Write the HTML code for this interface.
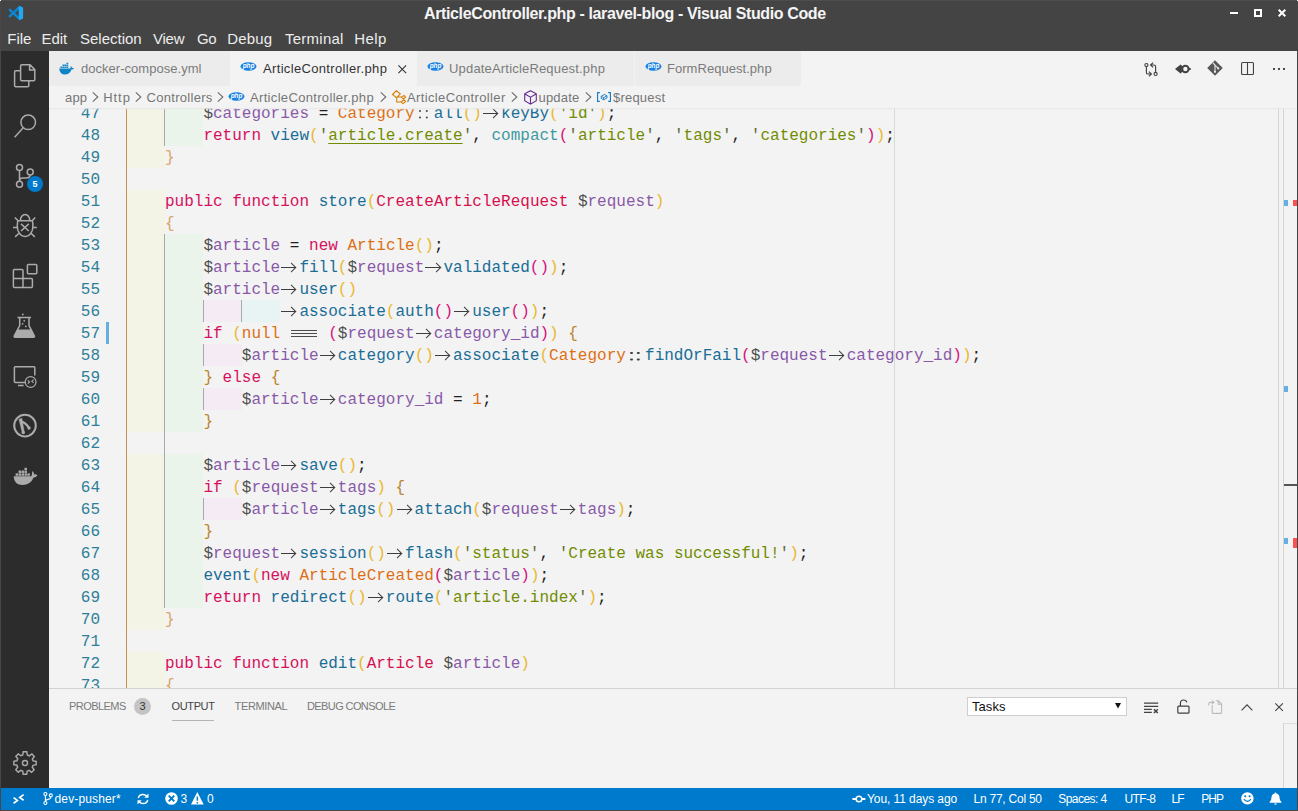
<!DOCTYPE html>
<html lang="en">
<head>
<meta charset="utf-8">
<title>ArticleController.php - laravel-blog - Visual Studio Code</title>
<style>
*,*::before,*::after{box-sizing:border-box;margin:0;padding:0}
html,body{width:1298px;height:811px;overflow:hidden;background:#f3f3f3}
body{position:relative;font-family:"Liberation Sans",sans-serif;color:#333}
.abs{position:absolute}
svg{position:absolute;overflow:visible}
/* ---------- title + menu ---------- */
#titlebar{position:absolute;left:0;top:0;width:1298px;height:51px;background:#444}
#title{position:absolute;left:424px;top:3px;height:22px;line-height:22px;font-weight:bold;font-size:16px;color:#f4f4f4;white-space:pre;letter-spacing:-0.37px}
.mi{position:absolute;top:28px;height:22px;line-height:22px;font-size:15px;color:#ededed;white-space:pre}
/* ---------- activity bar ---------- */
#activity{position:absolute;left:1px;top:51px;width:48px;height:737px;background:#2c2c2c}
#activity svg{fill:none;stroke:#ababab;stroke-width:1.5}
/* ---------- tabs ---------- */
#tabs{position:absolute;left:49px;top:51px;width:1248px;height:35px;background:#f3f3f3}
.tab{position:absolute;top:0;height:35px;background:#ececec}
.tab.on{background:#f3f3f3}
.tab .lb{position:absolute;left:32px;top:0;height:35px;line-height:35px;font-size:13px;color:#7b7b7b;white-space:pre}
.tab.on .lb{color:#333}
/* ---------- breadcrumbs ---------- */
#crumbs{position:absolute;left:49px;top:86px;width:1248px;height:22px;background:#f3f3f3}
#crumbs span{position:absolute;top:1px;height:22px;line-height:22px;font-size:13px;color:#767676;white-space:pre}
/* ---------- editor ---------- */
#editor{position:absolute;left:49px;top:108px;width:1248px;height:580px;overflow:hidden;background:#f3f3f3;
  font-family:"Liberation Mono",monospace;font-size:16px}
.ln{position:absolute;left:0;width:1248px;height:22px;line-height:22px;white-space:pre}
.no{position:absolute;left:0;top:1px;width:51px;text-align:right;color:#2d7f99}
.tx{position:absolute;top:1px;height:22px}
.r{position:absolute;top:0;width:38.4px;height:22px}
.r1{background:#f4f4e6}.r2{background:#ebf4eb}.r3{background:#f4ebf4}.r4{background:#e8f3f3}
.g{position:absolute;width:1px;background:#a9a9a9}
.g.go{background:#c98f52}
.k{color:#d6105e}.f{color:#196d96}.v{color:#8959a8}.d{color:#4d4d4d}.c{color:#dd6f13}.t{color:#d6104f}
.s{color:#718c00}.q{color:#5f6b3a}.n{color:#dd6f13}.p{color:#1f1f1f}.aq{color:#3e999f}
.b1{color:#eab830}.b2{color:#d6127a}.ca{color:#dba469}.cb{color:#b8862e}
.s.u{text-decoration:underline;text-decoration-color:#718c00;text-underline-offset:3px;text-decoration-thickness:1px}
.ar,.dc,.e3{display:inline-block;position:relative;height:22px;vertical-align:top;font-size:0;color:transparent}
.ar{width:19.2px}
.ar::before{content:"";position:absolute;left:1.1px;top:9.65px;width:15px;height:1.7px;background:#3e3e3e}
.ar::after{content:"";position:absolute;left:8.25px;top:7.1px;width:6.8px;height:6.8px;border-top:1.7px solid #3e3e3e;border-right:1.7px solid #3e3e3e;transform:rotate(45deg)}
.dc{width:19.2px}
.dc::before{content:"";position:absolute;left:4.6px;top:7.2px;width:2.1px;height:2.2px;border-radius:1px;background:#444;box-shadow:6.8px 0 0 #444,0 6.4px 0 #444,6.8px 6.4px 0 #444}
.e3{width:28.8px}
.e3::before{content:"";position:absolute;left:1.4px;top:7px;width:25.8px;height:1px;background:#4a4a4a;box-shadow:0 3px 0 #4a4a4a,0 6px 0 #4a4a4a}
/* ---------- panel ---------- */
#panel{position:absolute;left:49px;top:688px;width:1248px;height:100px;background:#f3f3f3;border-top:1px solid #d2d2d2}
.pt{position:absolute;top:6px;height:22px;line-height:22px;font-size:11px;color:#7a7a7a;white-space:pre}
/* ---------- status ---------- */
#status{position:absolute;left:1px;top:788px;width:1296px;height:22px;background:#007acc;color:#fff}
#status span{position:absolute;top:0;height:22px;line-height:22px;font-size:12px;white-space:pre;color:#fff}
#status svg{fill:#fff}
</style>
</head>
<body>

<!-- =================== TITLE BAR + MENU =================== -->
<div id="titlebar">
  <svg style="left:9px;top:6px" width="14" height="14" viewBox="0 0 14 14"><path d="M0.9 3.9 L10.6 12.8 M0.9 10.1 L10.6 1.2" stroke="#0b86d4" stroke-width="2.5" stroke-linecap="round" fill="none"/><path d="M9.7 0.9 L10.6 -0.1 L14.1 1.4 V12.6 L10.6 14.1 L9.7 13.1 Z" fill="#23a9f2"/></svg>
  <div id="title">ArticleController.php - laravel-blog - Visual Studio Code</div>
  <span class="mi" style="left:7.3px">File</span>
  <span class="mi" style="left:41.4px">Edit</span>
  <span class="mi" style="left:80px">Selection</span>
  <span class="mi" style="left:153px;letter-spacing:-0.25px">View</span>
  <span class="mi" style="left:197px;letter-spacing:-0.5px">Go</span>
  <span class="mi" style="left:227.3px;letter-spacing:0.15px">Debug</span>
  <span class="mi" style="left:285px;letter-spacing:0.25px">Terminal</span>
  <span class="mi" style="left:354.3px;letter-spacing:0.4px">Help</span>
  <i class="abs" style="left:1230px;top:12px;width:8px;height:2px;background:#fff"></i>
  <i class="abs" style="left:1254px;top:9px;width:8px;height:8px;border:2px solid #fff"></i>
  <svg style="left:1278px;top:9px" width="8" height="8" viewBox="0 0 8 8"><path d="M0.7 0.7 L7.3 7.3 M7.3 0.7 L0.7 7.3" stroke="#fff" stroke-width="2" fill="none"/></svg>
</div>

<!-- =================== ACTIVITY BAR =================== -->
<div id="activity">
  <!-- explorer (files) : coords relative to activity bar (x-1, y-51) -->
  <svg style="left:0;top:0" width="48" height="50" viewBox="0 0 48 50">
    <path d="M27 13.8 H20.8 Q19.6 13.8 19.6 15 V28.6 Q19.6 29.8 20.8 29.8 H32.6 Q33.8 29.8 33.8 28.6 V18.6 L29 13.8 Z M28.6 14 V19 H33.6"/>
    <path d="M19.4 19.8 H14.8 Q13.6 19.8 13.6 21 V34.6 Q13.6 35.8 14.8 35.8 H26.6 Q27.8 35.8 27.8 34.6 V30"/>
  </svg>
  <!-- search -->
  <svg style="left:0;top:50px" width="48" height="50" viewBox="0 0 48 50">
    <circle cx="27.2" cy="21.3" r="7.3"/><path d="M22 27 L13.6 36.2"/>
  </svg>
  <!-- source control -->
  <svg style="left:0;top:100px" width="48" height="50" viewBox="0 0 48 50">
    <circle cx="18.5" cy="16.4" r="3"/><circle cx="18.5" cy="33.3" r="3"/><circle cx="29.2" cy="21" r="3"/>
    <path d="M18.5 19.4 V30.3 M29.2 24 Q29.2 26.9 25 26.9 H21.5 Q18.5 26.9 18.5 30"/>
  </svg>
  <div class="abs" style="left:26px;top:125px;width:16px;height:16px;border-radius:8px;background:#007acc;color:#fff;font:bold 9px 'Liberation Sans',sans-serif;line-height:16px;text-align:center">5</div>
  <!-- debug -->
  <svg style="left:0;top:150px" width="48" height="50" viewBox="0 0 48 50">
    <path d="M19.4 19.6 A4.7 6.2 0 0 1 28.8 19.6"/>
    <path d="M16.8 19.8 H31.4 Q32.6 26 31 30 Q28.6 35.5 24.1 35.5 Q19.6 35.5 17.2 30 Q15.6 26 16.8 19.8 Z"/>
    <path d="M13.9 16.4 L16.8 19.6 M34.2 16.4 L31.4 19.6 M12 26.6 H16.2 M32 26.6 H35.9 M14.1 35.9 L18.1 32.2 M33.8 35.9 L30 32.2 M20 22.9 L27.8 30 M27.8 22.9 L20 30"/>
  </svg>
  <!-- extensions -->
  <svg style="left:0;top:200px" width="48" height="50" viewBox="0 0 48 50">
    <path d="M13.4 18.6 H21 Q22 18.6 22 19.6 V27.4 H30.4 Q31.4 27.4 31.4 28.4 V35.6 Q31.4 36.6 30.4 36.6 H13.4 Q12.4 36.6 12.4 35.6 V19.6 Q12.4 18.6 13.4 18.6 Z M12.4 27.4 H22 V36.6"/>
    <rect x="26.4" y="13.6" width="9.4" height="9.2" rx="1"/>
  </svg>
  <!-- test flask -->
  <svg style="left:0;top:250px" width="48" height="50" viewBox="0 0 48 50">
    <path d="M16.5 16.4 H30 M18.7 16.6 V24.5 L13.2 35 Q12.8 36.2 14 36.2 H32.6 Q33.8 36.2 33.4 35 L28 24.5 V16.6" />
    <path d="M16.4 28.6 H30.2 L33.2 35 Q33.4 35.9 32.6 35.9 H14 Q13.2 35.9 13.4 35 Z" fill="#ababab" stroke="none"/>
    <circle cx="21.8" cy="13.4" r="0.9" fill="#ababab" stroke="none"/><circle cx="23.2" cy="19.8" r="0.9" fill="#ababab" stroke="none"/><circle cx="21.6" cy="22.8" r="0.9" fill="#ababab" stroke="none"/><circle cx="24.8" cy="25.4" r="0.9" fill="#ababab" stroke="none"/>
  </svg>
  <!-- remote explorer -->
  <svg style="left:0;top:300px" width="48" height="50" viewBox="0 0 48 50">
    <path d="M25 31.4 H14.2 Q13.4 31.4 13.4 30.6 V16.6 Q13.4 15.8 14.2 15.8 H33 Q33.8 15.8 33.8 16.6 V24.4 M17 34.6 H22.6"/>
    <circle cx="29.6" cy="31" r="5.4" stroke-width="1.2"/>
    <path d="M26.8 29.4 L28.6 31 L26.8 32.6 M32.6 28.6 L30.8 30.2 L32.6 31.8" stroke-width="1.1"/>
  </svg>
  <!-- gitlens -->
  <svg style="left:0;top:350px" width="48" height="50" viewBox="0 0 48 50">
    <circle cx="24" cy="24.6" r="10.8" stroke-width="2"/>
    <path d="M17.9 18.2 L20.9 17.2 L23.4 31.4 L21.2 31.7 Z" fill="#ababab" stroke="#ababab" stroke-width="0.4"/>
    <path d="M20.6 20.6 Q25 22 27.9 26.8" stroke-width="2.2"/>
    <circle cx="22.3" cy="31.6" r="1.7" fill="#ababab" stroke="none"/><circle cx="28" cy="27" r="1.7" fill="#ababab" stroke="none"/>
  </svg>
  <!-- docker -->
  <svg style="left:0;top:400px" width="48" height="50" viewBox="0 0 48 50">
    <g fill="#ababab" stroke="none">
    <path d="M12.6 25.2 H30.4 Q31.2 22.6 31.2 20 Q33 21.4 33.3 23.4 Q35.2 23 36.4 24.2 Q35.4 26.6 32.6 26.6 Q29.6 34 21.4 34 Q13.2 34 12.6 25.2 Z"/>
    <rect x="14.60" y="22.35" width="2.5" height="2.4"/><rect x="17.55" y="22.35" width="2.5" height="2.4"/><rect x="20.50" y="22.35" width="2.5" height="2.4"/><rect x="23.45" y="22.35" width="2.5" height="2.4"/><rect x="26.40" y="22.35" width="2.5" height="2.4"/><rect x="17.55" y="19.55" width="2.5" height="2.4"/><rect x="20.50" y="19.55" width="2.5" height="2.4"/><rect x="23.45" y="19.55" width="2.5" height="2.4"/><rect x="23.45" y="16.8" width="2.5" height="2.35"/>
    </g>
  </svg>
  <!-- gear -->
  <svg style="left:0;top:687px" width="48" height="50" viewBox="0 0 48 50">
    <g transform="translate(24 25) scale(0.93)">
      <path id="gearp" d="M-1.9 -12 H1.9 L2.5 -8.6 L4.6 -7.7 L7.4 -9.7 L10 -7 L7.9 -4.3 L8.7 -2.3 L12 -1.7 V1.9 L8.7 2.5 L7.8 4.6 L9.8 7.3 L7.1 10 L4.4 8 L2.4 8.8 L1.8 12 H-1.9 L-2.5 8.7 L-4.5 7.9 L-7.3 9.9 L-9.9 7.2 L-7.9 4.5 L-8.7 2.4 L-12 1.8 V-1.8 L-8.7 -2.4 L-7.8 -4.5 L-9.8 -7.2 L-7.2 -9.8 L-4.4 -7.8 L-2.4 -8.7 Z" stroke-width="1.55"/>
      <circle cx="0" cy="0" r="2.7" stroke-width="1.55"/>
    </g>
  </svg>

</div>

<!-- =================== TABS =================== -->
<div id="tabs">
  <!-- tab x are relative to #tabs (abs x - 49) -->
  <div class="tab" style="left:0;width:181px">
    <svg style="left:10px;top:12px" width="16" height="12" viewBox="0 0 16 12"><path d="M0.2 5.6 H11.4 Q11.9 4.2 11.4 3.1 Q12.9 3.7 13.1 4.9 Q14.3 4.6 15 5.2 Q14.3 6.6 12.5 6.6 Q10.8 11.6 5.8 11.6 Q0.8 11.6 0.2 5.6 Z" fill="#0b84c8"/><path d="M1.4 3.4 H9.2 V5.1 H1.4 Z M3.4 1.5 H9.2 V3 H3.4 Z M7.3 -0.3 H9.2 V1.1 H7.3 Z" fill="#0b84c8"/><path d="M3.35 1.5 V5.1 M5.3 1.5 V5.1 M7.25 -0.3 V5.1" stroke="#ececec" stroke-width="0.35" fill="none"/></svg>
    <span class="lb" style="letter-spacing:0.03px">docker-compose.yml</span>
  </div>
  <div class="tab on" style="left:181px;width:187px">
    <svg style="left:10.4px;top:11.4px" width="17" height="9" viewBox="0 0 17 9"><ellipse cx="8.5" cy="4.5" rx="8" ry="4.2" fill="#1a82e2"/><text x="8.5" y="6.3" font-family="Liberation Sans, sans-serif" font-size="6.4" font-weight="bold" font-style="italic" fill="#fff" text-anchor="middle">php</text></svg>
    <span class="lb" style="left:33px;letter-spacing:0.34px">ArticleController.php</span>
    <svg style="left:168px;top:13.6px" width="9" height="9" viewBox="0 0 9 9"><path d="M0.4 0.4 L8.1 8.1 M8.1 0.4 L0.4 8.1" stroke="#333" stroke-width="1.1" fill="none"/></svg>
  </div>
  <div class="tab" style="left:368px;width:217px">
    <svg style="left:9.6px;top:11.4px" width="17" height="9" viewBox="0 0 17 9"><ellipse cx="8.5" cy="4.5" rx="8" ry="4.2" fill="#1a82e2"/><text x="8.5" y="6.3" font-family="Liberation Sans, sans-serif" font-size="6.4" font-weight="bold" font-style="italic" fill="#fff" text-anchor="middle">php</text></svg>
    <span class="lb" style="letter-spacing:0.18px">UpdateArticleRequest.php</span>
  </div>
  <div class="tab" style="left:586px;width:166px">
    <svg style="left:9.6px;top:11.4px" width="17" height="9" viewBox="0 0 17 9"><ellipse cx="8.5" cy="4.5" rx="8" ry="4.2" fill="#1a82e2"/><text x="8.5" y="6.3" font-family="Liberation Sans, sans-serif" font-size="6.4" font-weight="bold" font-style="italic" fill="#fff" text-anchor="middle">php</text></svg>
    <span class="lb" style="letter-spacing:0.04px">FormRequest.php</span>
  </div>
  <!-- editor actions -->
  <svg style="left:1095px;top:10.5px" width="14" height="15" viewBox="0 0 14 15" fill="none" stroke="#424242" stroke-width="1.15">
    <circle cx="2.4" cy="3" r="1.55"/><circle cx="11.6" cy="11.9" r="1.55"/>
    <path d="M2.4 4.6 V10.4 Q2.4 12 4 12 H7.2 M4.9 9.7 L7.4 12 L4.9 14.3 M11.6 10.3 V4.6 Q11.6 3 10 3 H6.8 M9.1 0.7 L6.6 3 L9.1 5.3"/>
  </svg>
  <svg style="left:1126px;top:12.9px" width="16" height="10" viewBox="0 0 16 10">
    <path d="M0 5 L5.6 0.5 L7.6 2.6 L6.6 5 L7.6 7.4 L5.6 9.5 Z" fill="#424242"/>
    <circle cx="10.4" cy="5" r="3.2" fill="none" stroke="#424242" stroke-width="2"/><path d="M13.4 5 H15.8" stroke="#424242" stroke-width="1.8"/>
  </svg>
  <svg style="left:1158px;top:9.4px" width="16" height="16" viewBox="0 0 16 16">
    <path d="M8 0.2 L15.8 8 L8 15.8 L0.2 8 Z" fill="#575757"/>
    <path d="M6 3 L8 5 V12 M8.2 5.4 L11 8.2" stroke="#e6e6e6" stroke-width="1.1" fill="none"/><circle cx="8" cy="11.8" r="1.1" fill="#eee"/><circle cx="11.2" cy="8.4" r="1.1" fill="#eee"/>
  </svg>
  <svg style="left:1192px;top:11px" width="13" height="13" viewBox="0 0 13 13" fill="none" stroke="#424242" stroke-width="1.1">
    <rect x="0.55" y="0.55" width="11.9" height="11.9" rx="1"/><path d="M6.5 0.6 V12.4"/>
  </svg>
  <svg style="left:1223.5px;top:17.2px" width="13" height="2" viewBox="0 0 13 2"><rect x="0" y="0" width="2" height="1.9" fill="#424242"/><rect x="5" y="0" width="2" height="1.9" fill="#424242"/><rect x="10" y="0" width="2" height="1.9" fill="#424242"/></svg>

</div>

<!-- =================== BREADCRUMBS =================== -->
<div id="crumbs">
  <!-- crumbs x relative to #crumbs (abs x - 49) -->
  <span style="left:16px;letter-spacing:0.2px">app</span>
  <svg style="left:43.2px;top:6.3px" width="7" height="10" viewBox="0 0 7 10"><path d="M0.8 0.3 L5.8 5 L0.8 9.7" stroke="#6e6e6e" stroke-width="1.15" fill="none"/></svg>
  <span style="left:54.2px;letter-spacing:0.95px">Http</span>
  <svg style="left:85.8px;top:6.3px" width="7" height="10" viewBox="0 0 7 10"><path d="M0.8 0.3 L5.8 5 L0.8 9.7" stroke="#6e6e6e" stroke-width="1.15" fill="none"/></svg>
  <span style="left:97.5px;letter-spacing:0.3px">Controllers</span>
  <svg style="left:167.5px;top:6.3px" width="7" height="10" viewBox="0 0 7 10"><path d="M0.8 0.3 L5.8 5 L0.8 9.7" stroke="#6e6e6e" stroke-width="1.15" fill="none"/></svg>
  <svg style="left:178.7px;top:6px" width="17" height="9" viewBox="0 0 17 9"><ellipse cx="8.5" cy="4.5" rx="8" ry="4.2" fill="#1a82e2"/><text x="8.5" y="6.3" font-family="Liberation Sans, sans-serif" font-size="6.4" font-weight="bold" font-style="italic" fill="#fff" text-anchor="middle">php</text></svg>
  <span style="left:201px;letter-spacing:0.33px">ArticleController.php</span>
  <svg style="left:330.5px;top:6.3px" width="7" height="10" viewBox="0 0 7 10"><path d="M0.8 0.3 L5.8 5 L0.8 9.7" stroke="#6e6e6e" stroke-width="1.15" fill="none"/></svg>
  <svg style="left:343px;top:3.5px" width="14" height="14" viewBox="0 0 14 14" fill="none" stroke="#d67e00" stroke-width="1.05">
    <path d="M0.5 4.5 L4.3 0.8 L8.3 3.9 L4.6 7.7 Z M9.4 7.1 L12.1 5.4 L13.6 7.3 L11 8.9 Z M9.1 11.8 L12.1 9.8 L13.6 11.6 L10.9 13.6 Z M5.4 7 H9.4 M4.7 7.7 V11.9 H9.1"/>
  </svg>
  <span style="left:358px;letter-spacing:0.36px">ArticleController</span>
  <svg style="left:461.5px;top:6.3px" width="7" height="10" viewBox="0 0 7 10"><path d="M0.8 0.3 L5.8 5 L0.8 9.7" stroke="#6e6e6e" stroke-width="1.15" fill="none"/></svg>
  <svg style="left:474.5px;top:3.5px" width="13" height="15" viewBox="0 0 13 15" fill="none" stroke="#652d90" stroke-width="1.1">
    <path d="M6.5 0.7 L12.3 3.8 V10.8 L6.5 14.2 L0.7 10.8 V3.8 Z M0.9 4 L6.5 7.2 L12.1 4 M6.5 7.2 V14"/>
  </svg>
  <span style="left:489.5px;letter-spacing:0.2px">update</span>
  <svg style="left:535.5px;top:6.3px" width="7" height="10" viewBox="0 0 7 10"><path d="M0.8 0.3 L5.8 5 L0.8 9.7" stroke="#6e6e6e" stroke-width="1.15" fill="none"/></svg>
  <svg style="left:548px;top:6px" width="14" height="10" viewBox="0 0 14 10" fill="none" stroke="#0f78c8" stroke-width="1.1">
    <path d="M2.8 0.6 H0.6 V9.4 H2.8 M11.2 0.6 H13.4 V9.4 H11.2"/><path d="M7.6 2.4 L10 3.8 V6 L6.6 7.8 L4.2 6.4 V4.2 Z M4.4 4.4 L6.6 5.6 L9.8 4 M6.6 5.6 V7.6" stroke-width="0.9"/>
  </svg>
  <span style="left:564px;letter-spacing:0.2px">$request</span>

</div>

<!-- =================== EDITOR =================== -->
<div id="editor">
<div class="ln" style="top:-6px"><span class="no">47</span><i class="r r1" style="left:77.6px"></i><i class="r r2" style="left:116.0px"></i><span class="tx" style="left:154.4px"><span class="d">$</span><span class="v">categories</span> <span class="p">=</span> <span class="c">Category</span><span class="dc">::</span><span class="f">all</span><span class="b1">()</span><span class="ar">-&gt;</span><span class="f">keyBy</span><span class="b1">(</span><span class="q">'</span><span class="s">id</span><span class="q">'</span><span class="b1">)</span><span class="p">;</span></span></div>
<div class="ln" style="top:16px"><span class="no">48</span><i class="r r1" style="left:77.6px"></i><i class="r r2" style="left:116.0px"></i><span class="tx" style="left:154.4px"><span class="k">return</span> <span class="f">view</span><span class="b1">(</span><span class="q">'</span><span class="s u">article.create</span><span class="q">'</span><span class="p">,</span> <span class="aq">compact</span><span class="b2">(</span><span class="q">'</span><span class="s">article</span><span class="q">'</span><span class="p">,</span> <span class="q">'</span><span class="s">tags</span><span class="q">'</span><span class="p">,</span> <span class="q">'</span><span class="s">categories</span><span class="q">'</span><span class="b2">)</span><span class="b1">)</span><span class="p">;</span></span></div>
<div class="ln" style="top:38px"><span class="no">49</span><i class="r r1" style="left:77.6px"></i><span class="tx" style="left:116.0px"><span class="ca">}</span></span></div>
<div class="ln" style="top:60px"><span class="no">50</span><span class="tx" style="left:77.6px"></span></div>
<div class="ln" style="top:82px"><span class="no">51</span><i class="r r1" style="left:77.6px"></i><span class="tx" style="left:116.0px"><span class="k">public</span> <span class="k">function</span> <span class="f">store</span><span class="b1">(</span><span class="t">CreateArticleRequest</span> <span class="d">$</span><span class="v">request</span><span class="b1">)</span></span></div>
<div class="ln" style="top:104px"><span class="no">52</span><i class="r r1" style="left:77.6px"></i><span class="tx" style="left:116.0px"><span class="ca">{</span></span></div>
<div class="ln" style="top:126px"><span class="no">53</span><i class="r r1" style="left:77.6px"></i><i class="r r2" style="left:116.0px"></i><span class="tx" style="left:154.4px"><span class="d">$</span><span class="v">article</span> <span class="p">=</span> <span class="k">new</span> <span class="c">Article</span><span class="b1">()</span><span class="p">;</span></span></div>
<div class="ln" style="top:148px"><span class="no">54</span><i class="r r1" style="left:77.6px"></i><i class="r r2" style="left:116.0px"></i><span class="tx" style="left:154.4px"><span class="d">$</span><span class="v">article</span><span class="ar">-&gt;</span><span class="f">fill</span><span class="b1">(</span><span class="d">$</span><span class="v">request</span><span class="ar">-&gt;</span><span class="f">validated</span><span class="b2">()</span><span class="b1">)</span><span class="p">;</span></span></div>
<div class="ln" style="top:170px"><span class="no">55</span><i class="r r1" style="left:77.6px"></i><i class="r r2" style="left:116.0px"></i><span class="tx" style="left:154.4px"><span class="d">$</span><span class="v">article</span><span class="ar">-&gt;</span><span class="f">user</span><span class="b1">()</span></span></div>
<div class="ln" style="top:192px"><span class="no">56</span><i class="r r1" style="left:77.6px"></i><i class="r r2" style="left:116.0px"></i><i class="r r3" style="left:154.4px"></i><i class="r r4" style="left:192.8px"></i><span class="tx" style="left:231.2px"><span class="ar">-&gt;</span><span class="f">associate</span><span class="b1">(</span><span class="f">auth</span><span class="b2">()</span><span class="ar">-&gt;</span><span class="f">user</span><span class="b2">()</span><span class="b1">)</span><span class="p">;</span></span></div>
<div class="ln" style="top:214px"><span class="no">57</span><i class="r r1" style="left:77.6px"></i><i class="r r2" style="left:116.0px"></i><span class="tx" style="left:154.4px"><span class="k">if</span> <span class="b1">(</span><span class="n">null</span> <span class="e3">===</span> <span class="b2">(</span><span class="d">$</span><span class="v">request</span><span class="ar">-&gt;</span><span class="v">category_id</span><span class="b2">)</span><span class="b1">)</span> <span class="cb">{</span></span></div>
<div class="ln" style="top:236px"><span class="no">58</span><i class="r r1" style="left:77.6px"></i><i class="r r2" style="left:116.0px"></i><i class="r r3" style="left:154.4px"></i><span class="tx" style="left:192.8px"><span class="d">$</span><span class="v">article</span><span class="ar">-&gt;</span><span class="f">category</span><span class="b1">()</span><span class="ar">-&gt;</span><span class="f">associate</span><span class="b1">(</span><span class="c">Category</span><span class="dc">::</span><span class="f">findOrFail</span><span class="b2">(</span><span class="d">$</span><span class="v">request</span><span class="ar">-&gt;</span><span class="v">category_id</span><span class="b2">)</span><span class="b1">)</span><span class="p">;</span></span></div>
<div class="ln" style="top:258px"><span class="no">59</span><i class="r r1" style="left:77.6px"></i><i class="r r2" style="left:116.0px"></i><span class="tx" style="left:154.4px"><span class="cb">}</span> <span class="k">else</span> <span class="cb">{</span></span></div>
<div class="ln" style="top:280px"><span class="no">60</span><i class="r r1" style="left:77.6px"></i><i class="r r2" style="left:116.0px"></i><i class="r r3" style="left:154.4px"></i><span class="tx" style="left:192.8px"><span class="d">$</span><span class="v">article</span><span class="ar">-&gt;</span><span class="v">category_id</span> <span class="p">=</span> <span class="n">1</span><span class="p">;</span></span></div>
<div class="ln" style="top:302px"><span class="no">61</span><i class="r r1" style="left:77.6px"></i><i class="r r2" style="left:116.0px"></i><span class="tx" style="left:154.4px"><span class="cb">}</span></span></div>
<div class="ln" style="top:324px"><span class="no">62</span><span class="tx" style="left:77.6px"></span></div>
<div class="ln" style="top:346px"><span class="no">63</span><i class="r r1" style="left:77.6px"></i><i class="r r2" style="left:116.0px"></i><span class="tx" style="left:154.4px"><span class="d">$</span><span class="v">article</span><span class="ar">-&gt;</span><span class="f">save</span><span class="b1">()</span><span class="p">;</span></span></div>
<div class="ln" style="top:368px"><span class="no">64</span><i class="r r1" style="left:77.6px"></i><i class="r r2" style="left:116.0px"></i><span class="tx" style="left:154.4px"><span class="k">if</span> <span class="b1">(</span><span class="d">$</span><span class="v">request</span><span class="ar">-&gt;</span><span class="v">tags</span><span class="b1">)</span> <span class="cb">{</span></span></div>
<div class="ln" style="top:390px"><span class="no">65</span><i class="r r1" style="left:77.6px"></i><i class="r r2" style="left:116.0px"></i><i class="r r3" style="left:154.4px"></i><span class="tx" style="left:192.8px"><span class="d">$</span><span class="v">article</span><span class="ar">-&gt;</span><span class="f">tags</span><span class="b1">()</span><span class="ar">-&gt;</span><span class="f">attach</span><span class="b1">(</span><span class="d">$</span><span class="v">request</span><span class="ar">-&gt;</span><span class="v">tags</span><span class="b1">)</span><span class="p">;</span></span></div>
<div class="ln" style="top:412px"><span class="no">66</span><i class="r r1" style="left:77.6px"></i><i class="r r2" style="left:116.0px"></i><span class="tx" style="left:154.4px"><span class="cb">}</span></span></div>
<div class="ln" style="top:434px"><span class="no">67</span><i class="r r1" style="left:77.6px"></i><i class="r r2" style="left:116.0px"></i><span class="tx" style="left:154.4px"><span class="d">$</span><span class="v">request</span><span class="ar">-&gt;</span><span class="f">session</span><span class="b1">()</span><span class="ar">-&gt;</span><span class="f">flash</span><span class="b1">(</span><span class="q">'</span><span class="s">status</span><span class="q">'</span><span class="p">,</span> <span class="q">'</span><span class="s">Create was successful!</span><span class="q">'</span><span class="b1">)</span><span class="p">;</span></span></div>
<div class="ln" style="top:456px"><span class="no">68</span><i class="r r1" style="left:77.6px"></i><i class="r r2" style="left:116.0px"></i><span class="tx" style="left:154.4px"><span class="f">event</span><span class="b1">(</span><span class="k">new</span> <span class="c">ArticleCreated</span><span class="b2">(</span><span class="d">$</span><span class="v">article</span><span class="b2">)</span><span class="b1">)</span><span class="p">;</span></span></div>
<div class="ln" style="top:478px"><span class="no">69</span><i class="r r1" style="left:77.6px"></i><i class="r r2" style="left:116.0px"></i><span class="tx" style="left:154.4px"><span class="k">return</span> <span class="f">redirect</span><span class="b1">()</span><span class="ar">-&gt;</span><span class="f">route</span><span class="b1">(</span><span class="q">'</span><span class="s">article.index</span><span class="q">'</span><span class="b1">)</span><span class="p">;</span></span></div>
<div class="ln" style="top:500px"><span class="no">70</span><i class="r r1" style="left:77.6px"></i><span class="tx" style="left:116.0px"><span class="ca">}</span></span></div>
<div class="ln" style="top:522px"><span class="no">71</span><span class="tx" style="left:77.6px"></span></div>
<div class="ln" style="top:544px"><span class="no">72</span><i class="r r1" style="left:77.6px"></i><span class="tx" style="left:116.0px"><span class="k">public</span> <span class="k">function</span> <span class="f">edit</span><span class="b1">(</span><span class="t">Article</span> <span class="d">$</span><span class="v">article</span><span class="b1">)</span></span></div>
<div class="ln" style="top:566px"><span class="no">73</span><i class="r r1" style="left:77.6px"></i><span class="tx" style="left:116.0px"><span class="ca">{</span></span></div>
<i class="g go" style="left:77px;top:-6px;height:594px"></i><i class="g" style="left:115px;top:-6px;height:44px"></i><i class="g" style="left:115px;top:126px;height:374px"></i><i class="g" style="left:154px;top:192px;height:22px"></i><i class="g" style="left:154px;top:236px;height:22px"></i><i class="g" style="left:154px;top:280px;height:22px"></i><i class="g" style="left:154px;top:390px;height:22px"></i><i class="g" style="left:192px;top:192px;height:22px"></i>
  <!-- editor extras: x relative to 49, y relative to 108 -->
  <i class="abs" style="left:845px;top:0;width:1px;height:580px;background:#d9d9d9"></i>
  <i class="abs" style="left:57px;top:214px;width:3px;height:22px;background:#66afe0"></i>
  <i class="abs" style="left:1229px;top:0;width:1px;height:580px;background:#d4d4d4"></i>
  <i class="abs" style="left:1234px;top:0;width:1px;height:580px;background:#d4d4d4"></i>
  <i class="abs" style="left:1235px;top:92px;width:4px;height:6px;background:#66afe0"></i>
  <i class="abs" style="left:1244px;top:92px;width:4px;height:6px;background:#fa5252"></i>
  <i class="abs" style="left:1235px;top:278px;width:4px;height:6px;background:#66afe0"></i>
  <i class="abs" style="left:1235px;top:376px;width:13px;height:2px;background:#555"></i>
  <i class="abs" style="left:1235px;top:430px;width:4px;height:6px;background:#66afe0"></i>
  <i class="abs" style="left:1244px;top:430px;width:4px;height:10px;background:#fa5252"></i>
  <i class="abs" style="left:0;top:0;width:1248px;height:2px;background:linear-gradient(#e7e7e7,rgba(243,243,243,0))"></i>

</div>

<!-- =================== PANEL =================== -->
<div id="panel">
  <!-- panel x relative to #panel (abs x - 49), y relative to 688 (border at 688, content from 689) -->
  <span class="pt" style="left:20px;letter-spacing:-0.55px">PROBLEMS</span>
  <div class="abs" style="left:85px;top:9px;width:17px;height:17px;border-radius:9px;background:#c4c4c4;color:#333;font-size:11px;line-height:17px;text-align:center">3</div>
  <span class="pt" style="left:122.5px;color:#424242;letter-spacing:-0.36px">OUTPUT</span>
  <i class="abs" style="left:122.5px;top:31px;width:42.5px;height:1px;background:#b4b4b4"></i>
  <span class="pt" style="left:185.5px;letter-spacing:-0.34px">TERMINAL</span>
  <span class="pt" style="left:258px;letter-spacing:-0.6px">DEBUG CONSOLE</span>
  <div class="abs" style="left:918px;top:8px;width:160px;height:19px;background:#fff;border:1px solid #cecece"></div>
  <span class="abs" style="left:923px;top:8px;height:19px;line-height:19px;font-size:13px;color:#111;letter-spacing:0.05px">Tasks</span>
  <svg style="left:1065.8px;top:14.2px" width="6" height="6" viewBox="0 0 6 6"><path d="M0 0 H6 L3 5.6 Z" fill="#111"/></svg>
  <svg style="left:1095px;top:12.5px" width="16" height="12" viewBox="0 0 16 12" fill="none" stroke="#424242" stroke-width="1.25">
    <path d="M0 1.2 H14.2 M0 4.3 H14.2 M0 7.4 H7.8 M0 10.4 H7.8"/><path d="M9.9 7.2 L13.8 11 M13.8 7.2 L9.9 11" stroke-width="1.5"/>
  </svg>
  <svg style="left:1127.5px;top:10px" width="14" height="15" viewBox="0 0 14 15" fill="none" stroke="#424242" stroke-width="1.2">
    <rect x="0.8" y="7.2" width="11.2" height="7" rx="0.9"/><path d="M3.4 7.2 V4.2 Q3.4 1 6.6 1 Q9.2 1 9.8 3.4"/>
  </svg>
  <svg style="left:1158.5px;top:10.5px" width="15" height="14" viewBox="0 0 15 14" fill="none" stroke="#bbb" stroke-width="1.1">
    <path d="M4.2 5 V12.8 Q4.2 13.4 4.8 13.4 H13 Q13.6 13.4 13.6 12.8 V4 L10.4 0.8 H7.8 M10.2 1 V4.2 H13.4 M0.8 5.6 V3.8 Q0.8 2.4 2.2 2.4 H5.8 M4 0.6 L6 2.4 L4 4.2"/>
  </svg>
  <svg style="left:1192px;top:14.5px" width="12" height="7" viewBox="0 0 12 7"><path d="M0.6 6.4 L6 0.8 L11.4 6.4" stroke="#424242" stroke-width="1.15" fill="none"/></svg>
  <svg style="left:1226px;top:13.8px" width="8" height="8" viewBox="0 0 8 8"><path d="M0.3 0.3 L7.9 7.9 M7.9 0.3 L0.3 7.9" stroke="#424242" stroke-width="1.1" fill="none"/></svg>
  <i class="abs" style="left:1234px;top:34px;width:1px;height:65px;background:#d4d4d4"></i><i class="abs" style="left:1234px;top:34px;width:14px;height:1px;background:#dcdcdc"></i>

</div>

<!-- =================== STATUS BAR =================== -->
<div id="status">
  <!-- status x relative to #status (abs x - 1), y relative 788 -->
  <svg style="left:11.5px;top:5.5px" width="12" height="10" viewBox="0 0 12 10"><path d="M0.6 3.6 L4.4 6.4 L0.6 9.2 M10.6 0.6 L6.8 3.4 L10.6 6.2" stroke="#fff" stroke-width="1.75" fill="none"/></svg>
  <svg style="left:41.5px;top:4px" width="10" height="13" viewBox="0 0 10 13"><g fill="none" stroke="#fff" stroke-width="1.1"><circle cx="2.4" cy="2" r="1.5"/><circle cx="2.4" cy="11" r="1.5"/><circle cx="7.8" cy="3.4" r="1.5"/><path d="M2.4 3.6 V9.4 M7.8 5 Q7.8 7 5 7.4 Q2.6 7.8 2.4 9.4"/></g></svg>
  <span style="left:53.5px;letter-spacing:0.14px">dev-pusher*</span>
  <svg style="left:136px;top:4.8px" width="12" height="12" viewBox="0 0 12 12"><g fill="none" stroke="#fff" stroke-width="1.45"><path d="M1.3 5.2 Q2 1.5 6 1.5 Q8.4 1.5 9.8 3.4 M10.7 6.8 Q10 10.5 6 10.5 Q3.6 10.5 2.2 8.6"/></g><path d="M11.5 0.6 V4.8 H7.3 Z M0.5 11.4 V7.2 H4.7 Z"/></svg>
  <svg style="left:163.6px;top:3.9px" width="13" height="13" viewBox="0 0 13 13"><circle cx="6.5" cy="6.5" r="6.3"/><path d="M3.7 3.7 L9.3 9.3 M9.3 3.7 L3.7 9.3" stroke="#007acc" stroke-width="1.9" fill="none"/></svg>
  <span style="left:179.5px">3</span>
  <svg style="left:190.2px;top:4.1px" width="13" height="13" viewBox="0 0 13 13"><path d="M6.3 0.1 L12.7 12.6 H0 Z"/><path d="M6.35 4.4 V8.8 M6.35 10 V11.5" stroke="#007acc" stroke-width="1.5" fill="none"/></svg>
  <span style="left:206px">0</span>
  <svg style="left:850.5px;top:6.6px" width="14" height="8" viewBox="0 0 14 8"><circle cx="7" cy="4" r="2.85" fill="none" stroke="#fff" stroke-width="1.5"/><path d="M0.4 4 H4 M10 4 H13.4" stroke="#fff" stroke-width="1.9" fill="none"/></svg>
  <span style="left:866px;letter-spacing:-0.08px">You, 11 days ago</span>
  <span style="left:972.5px;letter-spacing:-0.24px">Ln 77, Col 50</span>
  <span style="left:1057.3px;letter-spacing:-0.55px">Spaces: 4</span>
  <span style="left:1123.5px;letter-spacing:-0.65px">UTF-8</span>
  <span style="left:1170.4px;letter-spacing:-0.8px">LF</span>
  <span style="left:1200.2px;letter-spacing:-0.9px">PHP</span>
  <svg style="left:1239.7px;top:4.2px" width="13" height="13" viewBox="0 0 13 13"><circle cx="6.4" cy="6.4" r="6.2"/><circle cx="4.2" cy="4.3" r="1.05" fill="#007acc"/><circle cx="8.6" cy="4.3" r="1.05" fill="#007acc"/><path d="M2.8 7.2 Q6.4 11.6 10 7.2" stroke="#007acc" stroke-width="1.1" fill="none"/></svg>
  <svg style="left:1267.9px;top:3.8px" width="13" height="13" viewBox="0 0 13 13"><path d="M6.5 0.4 Q7.4 0.4 7.4 1.4 Q10.6 2.2 10.6 6 Q10.6 8.6 12.4 10 V10.8 H0.6 V10 Q2.4 8.6 2.4 6 Q2.4 2.2 5.6 1.4 Q5.6 0.4 6.5 0.4 Z M5.2 11.6 H7.8 Q7.6 12.8 6.5 12.8 Q5.4 12.8 5.2 11.6 Z"/></svg>

</div>

<!-- window frame -->
<i class="abs" style="left:1px;top:0;width:1296px;height:1px;background:#4d4d4d"></i>

<i class="abs" style="left:0;top:0;width:1px;height:811px;background:#4a4643"></i>
<i class="abs" style="left:1297px;top:0;width:1px;height:811px;background:#454545"></i>
<i class="abs" style="left:0;top:810px;width:1298px;height:1px;background:#4a4643"></i>
<i class="abs" style="left:0;top:0;width:1px;height:1px;background:#fff"></i>
<i class="abs" style="left:1297px;top:0;width:1px;height:1px;background:#fff"></i>
</body>
</html>
